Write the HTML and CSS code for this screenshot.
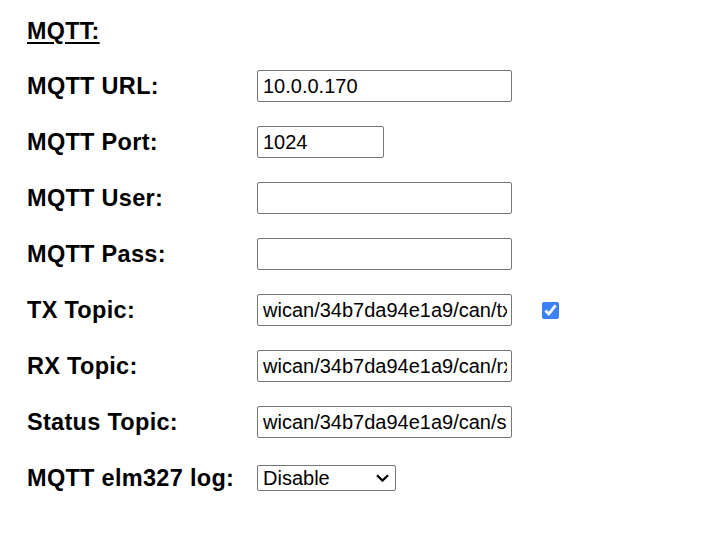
FILE: index.html
```html
<!DOCTYPE html>
<html>
<head>
<meta charset="utf-8">
<link rel="stylesheet" href="styles.css">
</head>
<body>
<div class="page">
  <h2 class="heading">MQTT:</h2>
  <div class="form">
    <label class="label">MQTT URL:</label>
    <div class="field"><input class="text" type="text" value="10.0.0.170"></div>

    <label class="label">MQTT Port:</label>
    <div class="field"><input class="text short" type="text" value="1024"></div>

    <label class="label">MQTT User:</label>
    <div class="field"><input class="text" type="text" value=""></div>

    <label class="label">MQTT Pass:</label>
    <div class="field"><input class="text" type="password" value=""></div>

    <label class="label">TX Topic:</label>
    <div class="field"><input class="text" type="text" value="wican/34b7da94e1a9/can/tx"><input class="check" type="checkbox" checked></div>

    <label class="label">RX Topic:</label>
    <div class="field"><input class="text" type="text" value="wican/34b7da94e1a9/can/rx"></div>

    <label class="label">Status Topic:</label>
    <div class="field"><input class="text" type="text" value="wican/34b7da94e1a9/can/status"></div>

    <label class="label">MQTT elm327 log:</label>
    <div class="field">
      <div class="select-wrap">
        <select class="select"><option>Disable</option><option>Enable</option></select>
        <svg class="chevron" width="13" height="8" viewBox="0 0 13 8"><path d="M1 1.2 L6.5 6.6 L12 1.2" fill="none" stroke="#000" stroke-width="2.2"/></svg>
      </div>
    </div>
  </div>
</div>
</body>
</html>
```
FILE: styles.css
```css
html, body {
  margin: 0;
  padding: 0;
  background: #ffffff;
}

.page {
  padding-left: 27px;
  font-family: "Liberation Sans", Arial, sans-serif;
  color: #000;
}

.heading {
  margin: 0 0 13px 0;
  padding-top: 18px;
  font-size: 23.3px;
  letter-spacing: 0.3px;
  line-height: 27px;
  font-weight: bold;
  text-decoration: underline;
  text-underline-offset: 3px;
}

.form {
  display: grid;
  grid-template-columns: 230px auto;
  grid-auto-rows: 56px;
  align-items: center;
}

.label {
  font-size: 23.5px;
  letter-spacing: 0.3px;
  font-weight: bold;
  line-height: 27px;
}

.field {
  display: flex;
  align-items: center;
}

.text {
  box-sizing: border-box;
  width: 255px;
  height: 32px;
  margin: 0;
  padding: 0 4px 0 5px;
  border: 1px solid #767676;
  border-radius: 2px;
  font-family: "Liberation Sans", Arial, sans-serif;
  font-size: 20px;
  color: #000;
  background: #fff;
}

.text.short {
  width: 127px;
}

.check {
  width: 17px;
  height: 17px;
  margin: 0 0 0 30px;
  accent-color: #3b82f6;
}

.select-wrap {
  position: relative;
  display: flex;
}

.select {
  -webkit-appearance: none;
  appearance: none;
  box-sizing: border-box;
  width: 139px;
  height: 26px;
  margin: 0;
  padding: 0 24px 0 5px;
  border: 1px solid #767676;
  border-radius: 2px;
  font-family: "Liberation Sans", Arial, sans-serif;
  font-size: 20px;
  line-height: 24px;
  color: #000;
  background: #fff;
}

.chevron {
  position: absolute;
  right: 7px;
  top: 9px;
  pointer-events: none;
}
```
